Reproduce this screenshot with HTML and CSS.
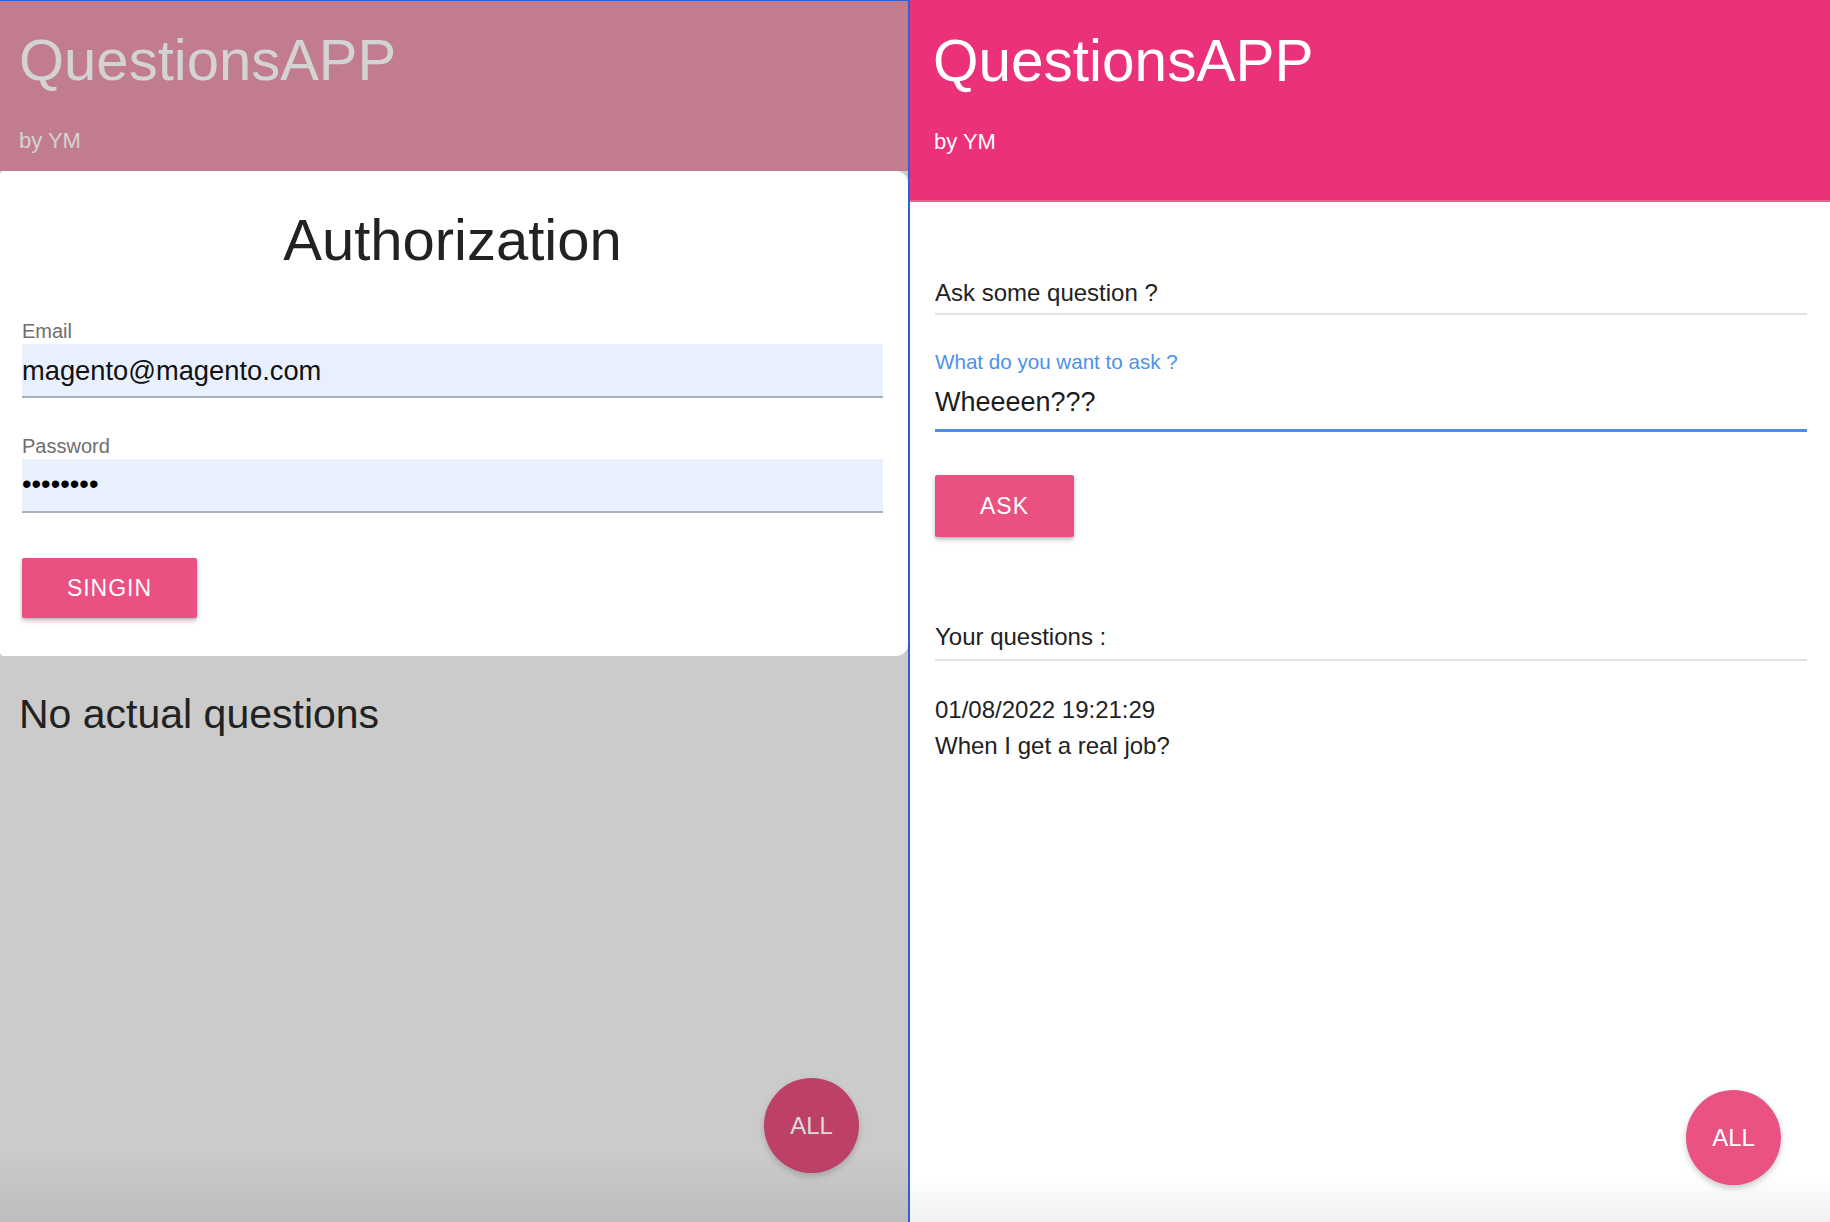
FILE: index.html
```html
<!DOCTYPE html>
<html lang="en">
<head>
<meta charset="utf-8">
<title>QuestionsAPP</title>
<link rel="stylesheet" href="styles.css">
</head>
<body>
<div class="screen">
  <section class="pane pane-auth">
    <header class="appbar appbar-dim">
      <h1 class="appbar-title">QuestionsAPP</h1>
      <p class="appbar-sub">by YM</p>
    </header>
    <div class="sheet">
      <h2 class="sheet-title">Authorization</h2>
      <div class="field field-email">
        <span class="field-label">Email</span>
        <div class="field-input">magento@magento.com</div>
      </div>
      <div class="field field-password">
        <span class="field-label">Password</span>
        <div class="field-input field-dots">••••••••</div>
      </div>
      <button class="btn btn-signin">SINGIN</button>
    </div>
    <p class="empty">No actual questions</p>
    <button class="fab fab-dim">ALL</button>
  </section>

  <section class="pane pane-main">
    <header class="appbar appbar-main">
      <h1 class="appbar-title">QuestionsAPP</h1>
      <p class="appbar-sub">by YM</p>
    </header>
    <div class="content">
      <h3 class="section-head">Ask some question ?</h3>
      <div class="ask-field">
        <span class="ask-label">What do you want to ask ?</span>
        <div class="ask-input">Wheeeen???</div>
      </div>
      <button class="btn btn-ask">ASK</button>
      <h3 class="section-head section-questions">Your questions :</h3>
      <ul class="questions">
        <li class="question">
          <div class="question-date">01/08/2022 19:21:29</div>
          <div class="question-text">When I get a real job?</div>
        </li>
      </ul>
    </div>
    <button class="fab fab-main">ALL</button>
  </section>
</div>
</body>
</html>
```

FILE: styles.css
```css
html, body {
  margin: 0;
  padding: 0;
}

body {
  width: 1830px;
  height: 1222px;
  overflow: hidden;
  font-family: "Liberation Sans", Arial, sans-serif;
  color: #222;
  background: #fff;
}

.screen {
  display: grid;
  grid-template-columns: 910px 920px;
  height: 1222px;
}

.pane {
  position: relative;
  box-sizing: border-box;
  height: 1222px;
  overflow: hidden;
}

.pane-auth {
  border-top: 1px solid #2d60d2;
  border-right: 2px solid #2d60d2;
  background: linear-gradient(to bottom, #cbcbcb 0, #cbcbcb 1150px, #bdbdbd 1222px);
}

.pane-main {
  background: linear-gradient(to bottom, #fff 0, #fff 1175px, #f1f1f1 1222px);
}

/* App bars */
.appbar-title {
  margin: 0;
  font-size: 58px;
  line-height: 58px;
  font-weight: 400;
}

.appbar-sub {
  margin: 41px 0 0;
  font-size: 22px;
  line-height: 22px;
}

.appbar-dim {
  background: #c17d8f;
  color: #d3d3d3;
  padding: 30px 20px 19px 19px;
}

.appbar-main {
  background: #eb3179;
  color: #fff;
  padding: 32px 24px 47px 23px;
  border-bottom: 2px solid #ef5c92;
}

.appbar-main .appbar-title {
  font-size: 58.5px;
  line-height: 58px;
}

.appbar-main .appbar-sub {
  font-size: 22px;
  line-height: 22px;
  margin: 41px 0 0 1px;
}

/* Auth sheet */
.sheet {
  background: #fff;
  border-radius: 4px 12px 12px 4px;
  padding: 40px 25px 38px 22px;
}

.sheet-title {
  margin: 0;
  font-size: 58px;
  line-height: 57px;
  font-weight: 400;
  text-align: center;
  color: #222;
}

.field-email {
  margin-top: 53px;
}

.field-password {
  margin-top: 38px;
}

.field-label {
  display: block;
  font-size: 20px;
  line-height: 20px;
  color: #6e6e6e;
  margin-bottom: 3px;
}

.field-input {
  height: 52px;
  background: #e8f0fe;
  border-bottom: 2px solid #a9b0bd;
  font-size: 27.3px;
  line-height: 54px;
  color: #111;
  white-space: nowrap;
  overflow: hidden;
}

.field-dots {
  color: #000;
  line-height: 50px;
}

.btn {
  display: flex;
  align-items: center;
  justify-content: center;
  border: 0;
  border-radius: 2px;
  background: #ea5181;
  color: #fff;
  font-family: "Liberation Sans", Arial, sans-serif;
  font-size: 23px;
  letter-spacing: 1px;
  padding: 0;
  box-shadow: 0 3px 5px rgba(0, 0, 0, 0.22), 0 1px 2px rgba(0, 0, 0, 0.12);
  cursor: pointer;
}

.btn-signin {
  margin-top: 45px;
  width: 175px;
  height: 60px;
}

.empty {
  margin: 38px 0 0;
  padding-left: 19px;
  font-size: 41px;
  line-height: 41px;
  color: #222;
}

/* Main content */
.content {
  padding: 0 23px 0 25px;
}

.section-head {
  margin: 79px 0 0;
  font-size: 24px;
  line-height: 24px;
  font-weight: 400;
  color: #222;
  padding-bottom: 8px;
  border-bottom: 2px solid #e2e2e2;
}

.ask-field {
  margin-top: 36px;
}

.ask-label {
  display: block;
  font-size: 20.6px;
  line-height: 21px;
  color: #4b91ea;
}

.ask-input {
  margin-top: 17px;
  font-size: 27px;
  line-height: 27px;
  color: #1c1c1c;
  padding-bottom: 13px;
  border-bottom: 3px solid #4a8fe7;
}

.btn-ask {
  margin-top: 43px;
  width: 139px;
  height: 62px;
}

.section-questions {
  margin-top: 88px;
  padding-bottom: 10px;
}

.questions {
  list-style: none;
  margin: 31px 0 0;
  padding: 0;
}

.question {
  font-size: 24px;
  line-height: 36px;
  color: #222;
}

/* Floating action buttons */
.fab {
  position: absolute;
  width: 95px;
  height: 95px;
  border-radius: 50%;
  border: 0;
  padding: 0;
  display: flex;
  align-items: center;
  justify-content: center;
  font-family: "Liberation Sans", Arial, sans-serif;
  font-size: 24px;
  cursor: pointer;
}

.fab-dim {
  right: 49px;
  bottom: 49px;
  background: #bd4166;
  color: #dadada;
  box-shadow: 0 3px 6px rgba(0, 0, 0, 0.18);
}

.fab-main {
  right: 49px;
  bottom: 37px;
  background: #ea5281;
  color: #fff;
  box-shadow: 0 3px 6px rgba(0, 0, 0, 0.2);
}
```
